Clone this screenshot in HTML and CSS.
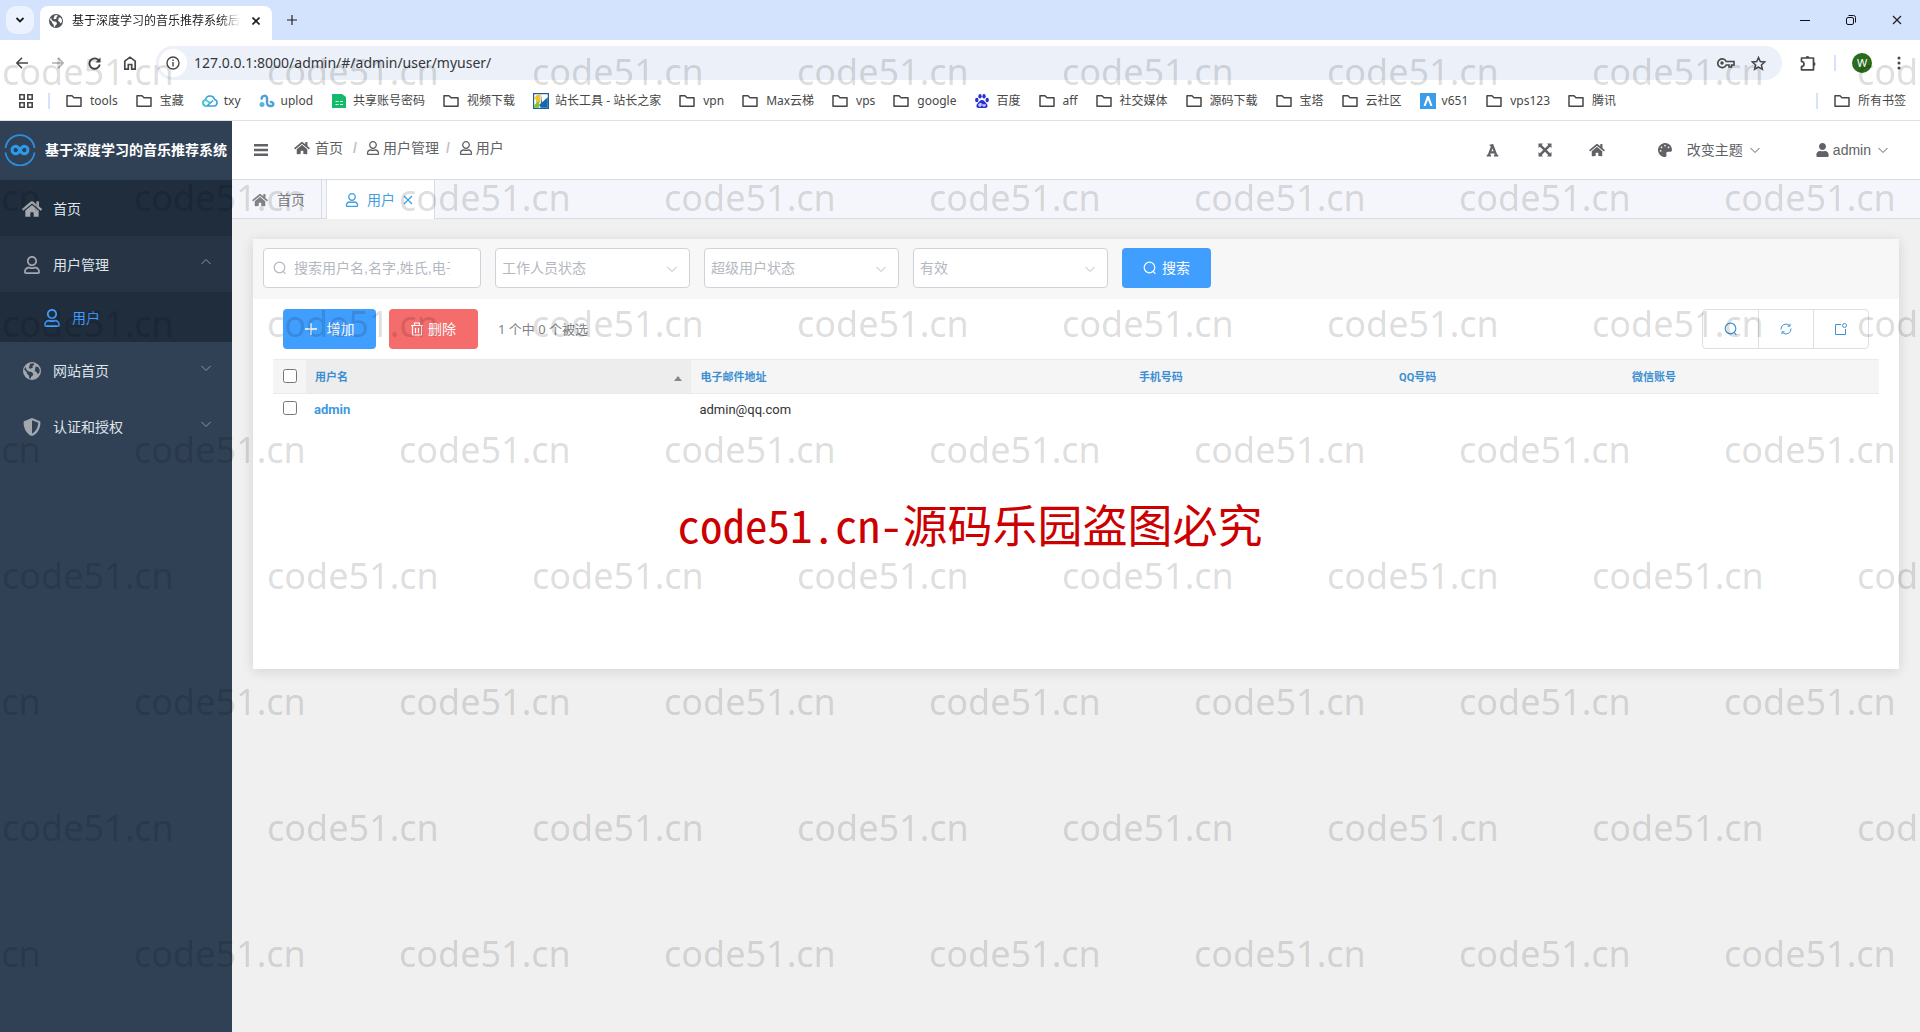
FILE: index.html
```html
<!DOCTYPE html>
<html lang="zh-CN">
<head>
<meta charset="utf-8">
<title>基于深度学习的音乐推荐系统后台</title>
<link rel="stylesheet" href="styles.css">
</head>
<body>
<svg class="sprite" aria-hidden="true">
  <symbol id="home" viewBox="0 0 576 512"><path fill="currentColor" d="M280.37 148.26L96 300.11V464a16 16 0 0 0 16 16l112.06-.29a16 16 0 0 0 15.92-16V368a16 16 0 0 1 16-16h64a16 16 0 0 1 16 16v95.64a16 16 0 0 0 16 16.05L464 480a16 16 0 0 0 16-16V300L295.67 148.26a12.19 12.19 0 0 0-15.3 0zM571.6 251.47L488 182.56V44.05a12 12 0 0 0-12-12h-56a12 12 0 0 0-12 12v72.61L318.47 43a48 48 0 0 0-61 0L4.34 251.47a12 12 0 0 0-1.6 16.9l25.5 31A12 12 0 0 0 45.15 301l235.22-193.74a12.19 12.19 0 0 1 15.3 0L530.9 301a12 12 0 0 0 16.9-1.6l25.5-31a12 12 0 0 0-1.7-16.93z"/></symbol>
  <symbol id="person" viewBox="0 0 448 512"><path fill="currentColor" d="M313.6 304c-28.7 0-42.5 16-89.6 16-47.1 0-60.8-16-89.6-16C60.2 304 0 364.2 0 438.4V464c0 26.5 21.5 48 48 48h352c26.5 0 48-21.5 48-48v-25.6c0-74.2-60.2-134.4-134.4-134.4zM400 464H48v-25.6c0-47.6 38.8-86.4 86.4-86.4 14.6 0 38.3 16 89.6 16 51.7 0 74.9-16 89.6-16 47.6 0 86.4 38.8 86.4 86.4V464zM224 288c79.5 0 144-64.5 144-144S303.5 0 224 0 80 64.5 80 144s64.5 144 144 144zm0-240c52.9 0 96 43.1 96 96s-43.1 96-96 96-96-43.1-96-96 43.1-96 96-96z"/></symbol>
  <symbol id="user" viewBox="0 0 448 512"><path fill="currentColor" d="M224 256c70.7 0 128-57.3 128-128S294.7 0 224 0 96 57.3 96 128s57.3 128 128 128zm89.6 32h-16.7c-22.2 10.2-46.9 16-72.9 16s-50.6-5.8-72.9-16h-16.7C60.2 288 0 348.2 0 422.4V464c0 26.5 21.5 48 48 48h352c26.5 0 48-21.5 48-48v-41.6c0-74.2-60.2-134.4-134.4-134.4z"/></symbol>
  <symbol id="shield" viewBox="0 0 512 512"><path fill="currentColor" d="M466.5 83.7l-192-80a48.15 48.15 0 0 0-36.9 0l-192 80C27.7 91.1 16 108.6 16 128c0 198.5 114.5 335.7 221.5 380.3 11.8 4.9 25.1 4.9 36.9 0C360.1 472.6 496 349.3 496 128c0-19.4-11.7-36.9-29.5-44.3zM256.1 446.3l-.1-381 175.9 73.3c-3.3 151.4-82.1 261.1-175.8 307.7z"/></symbol>
  <symbol id="globe" viewBox="0 0 20 20"><path fill="currentColor" fill-rule="evenodd" d="M10 0a10 10 0 1 0 0 20 10 10 0 0 0 0-20zM3 5.500l1 3.500 2.500 1.500 3 .5 2 2-1 2.500-1.500 1-.5 2-1.500-.5-.5-3-2-2-.5-2-2.500-2.500 0-1zM8 2l3.500-.5 1 1.500-2 1.500.5 1.500-2.500 1.500-2-.5.5-2zM14 5l3 .5 1.500 3 0 3-2 2-1.500-2.500-2-1 .5-2.500z"/></symbol>
  <symbol id="palette" viewBox="0 0 512 512"><path fill="currentColor" d="M204.3 5C104.9 24.4 24.8 104.3 5.200 203.4c-37 187 131.7 326.4 258.8 306.7 41.2-6.4 61.4-54.6 42.5-91.7-23.1-45.4 9.900-98.4 60.9-98.4h79.7c35.8 0 64.8-29.6 64.9-65.3C511.5 97.1 368.1-26.9 204.3 5zM96 320c-17.7 0-32-14.3-32-32s14.3-32 32-32 32 14.3 32 32-14.3 32-32 32zm32-128c-17.7 0-32-14.3-32-32s14.3-32 32-32 32 14.3 32 32-14.3 32-32 32zm128-64c-17.7 0-32-14.3-32-32s14.3-32 32-32 32 14.3 32 32-14.3 32-32 32zm128 64c-17.7 0-32-14.3-32-32s14.3-32 32-32 32 14.3 32 32-14.3 32-32 32z"/></symbol>
  <symbol id="expand" viewBox="0 0 14 14"><path fill="currentColor" d="M.5.5H5L3.700 1.900 7 5.200l3.300-3.300L9 .5h4.500V5l-1.400-1.300L8.800 7l3.300 3.300L13.500 9v4.500H9l1.300-1.400L7 8.800l-3.300 3.300L5 13.500H.5V9l1.400 1.300L5.200 7 1.900 3.700.5 5z"/></symbol>
  <symbol id="letter-a" viewBox="0 0 14 14"><path fill="none" stroke="currentColor" stroke-width="2.400" d="M2.800 12.500 7 1.500l4.200 11M4.200 9h5.600"/><path fill="none" stroke="currentColor" stroke-width="1.800" d="M.8 12.600h4.600M8.600 12.600h4.600M4 1.500h3.500"/></symbol>
  <symbol id="bars" viewBox="0 0 14 14"><path fill="currentColor" d="M0 1h14v2.400H0zM0 5.800h14v2.400H0zM0 10.600h14V13H0z"/></symbol>
  <symbol id="down" viewBox="0 0 10 10"><path fill="none" stroke="currentColor" d="M.5 3 5 7.500 9.500 3"/></symbol>
  <symbol id="up" viewBox="0 0 10 10"><path fill="none" stroke="currentColor" d="M.5 7 5 2.500 9.500 7"/></symbol>
  <symbol id="search" viewBox="0 0 14 14"><path fill="none" stroke="currentColor" stroke-width="1.200" d="M6.500 1.200a5.300 5.300 0 1 0 0 10.600 5.300 5.300 0 0 0 0-10.600zM10.200 10.400l2.200 2.400"/></symbol>
  <symbol id="cross" viewBox="0 0 10 10"><path fill="none" stroke="currentColor" stroke-width="1.200" d="M1 1l8 8M9 1 1 9"/></symbol>
  <symbol id="plus" viewBox="0 0 12 12"><path fill="none" stroke="currentColor" stroke-width="1.400" d="M6 0v12M0 6h12"/></symbol>
  <symbol id="folder" viewBox="0 0 16 16"><path fill="none" stroke="#474747" stroke-width="1.500" stroke-linejoin="round" d="M1 2.800h5l2 2h7v8.400H1z"/></symbol>
</svg>

<header class="chrome">
  <div class="tabbar">
    <button class="tab-search" aria-label="搜索标签页"><svg width="10" height="10" viewBox="0 0 10 10"><path fill="none" stroke="#1f1f1f" stroke-width="1.800" d="M1.500 3 5 6.500 8.500 3"/></svg></button>
    <div class="browser-tab">
      <svg width="14" height="14" class="tab-globe"><use href="#globe"/></svg>
      <span class="tab-title">基于深度学习的音乐推荐系统后台</span>
      <button class="bare" aria-label="关闭"><svg width="8" height="8" viewBox="0 0 8 8"><path stroke="#1f1f1f" stroke-width="1.600" d="M.5.5l7 7M7.500.5l-7 7"/></svg></button>
    </div>
    <button class="bare new-tab" aria-label="新标签页"><svg width="10" height="10"><use href="#plus"/></svg></button>
    <div class="window-buttons">
      <button class="bare" aria-label="最小化"><svg width="10" height="10" viewBox="0 0 10 10"><path stroke="#111" d="M0 5.500h10"/></svg></button>
      <button class="bare" aria-label="还原"><svg width="10" height="10" viewBox="0 0 10 10"><g fill="none" stroke="#111"><rect x=".5" y="2.500" width="7" height="7" rx="1.500"/><path d="M2.500.5H7.500a2 2 0 0 1 2 2V7.500"/></g></svg></button>
      <button class="bare" aria-label="关闭窗口"><svg width="10" height="10"><use href="#cross"/></svg></button>
    </div>
  </div>
  <div class="toolbar">
    <button class="bare tool" aria-label="后退"><svg width="12" height="12" viewBox="0 0 12 12"><path fill="none" stroke="#474747" stroke-width="1.600" d="M12 6H1M6 .8.900 6 6 11.200"/></svg></button>
    <button class="bare tool" aria-label="前进"><svg width="12" height="12" viewBox="0 0 12 12"><path fill="none" stroke="#b0b0b0" stroke-width="1.600" d="M0 6h11M6 .8 11.100 6 6 11.200"/></svg></button>
    <button class="bare tool" aria-label="刷新"><svg width="13" height="13" viewBox="0 0 13 13"><path fill="none" stroke="#474747" stroke-width="1.900" d="M11.800 7.500A5.200 5.200 0 1 1 10.500 3"/><path fill="#474747" d="M12.500.5v5H7.500z"/></svg></button>
    <button class="bare tool" aria-label="主页"><svg width="14" height="14" viewBox="0 0 14 14"><path fill="none" stroke="#474747" stroke-width="1.700" d="M1.800 13.100V5.200L7 1.200l5.200 4v7.900H8.700V8.500H5.300v4.600z"/></svg></button>
    <div class="address">
      <button class="bare site-info" aria-label="网站信息"><svg width="14" height="14" viewBox="0 0 14 14"><circle cx="7" cy="7" r="6" fill="none" stroke="#474747" stroke-width="1.400"/><path stroke="#474747" stroke-width="1.400" d="M7 6v4.500M7 3.500V5"/></svg></button>
      <input class="url" aria-label="地址" value="127.0.0.1:8000/admin/#/admin/user/myuser/">
      <button class="bare pill-btn" aria-label="密码"><svg width="18" height="12" viewBox="0 0 18 12"><path fill="none" stroke="#474747" stroke-width="1.600" d="M9.200 4.500A4.400 4.400 0 1 0 9.200 8H12v2h2.500V8H17V4.500z"/><circle cx="5" cy="6" r="1.700" fill="#474747"/></svg></button>
      <button class="bare pill-btn" aria-label="收藏"><svg width="15" height="15" viewBox="0 0 15 15"><path fill="none" stroke="#474747" stroke-width="1.500" d="M7.500 1.500l1.800 4.100 4.400.4-3.300 2.900 1 4.400-3.900-2.300-3.900 2.300 1-4.400L1.300 6l4.400-.4z"/></svg></button>
    </div>
    <button class="bare extension" aria-label="扩展程序"><svg width="17" height="17" viewBox="0 0 17 17"><path fill="none" stroke="#474747" stroke-width="1.700" stroke-linejoin="round" d="M1.500 3h12v11.800h-12V11.500a2.500 2.500 0 0 0 0-5z"/><path fill="#474747" d="M5.500 3a2 2 0 0 1 4 0zM13.500 7a2 2 0 0 1 0 4z"/></svg></button>
    <span class="rule"></span>
    <button class="avatar" aria-label="个人资料">W</button>
    <button class="bare menu-dots" aria-label="菜单"><svg width="4" height="14" viewBox="0 0 4 14"><g fill="#474747"><circle cx="2" cy="2" r="1.500"/><circle cx="2" cy="7" r="1.500"/><circle cx="2" cy="12" r="1.500"/></g></svg></button>
  </div>
  <nav class="bookmarks">
    <button class="bare" aria-label="应用"><svg width="14" height="14" viewBox="0 0 14 14"><path fill="none" stroke="#474747" stroke-width="1.600" d="M.8.800h4.400v4.400H.8zM8.800.800h4.400v4.400H8.800zM.8 8.800h4.400v4.400H.8zM8.800 8.800h4.400v4.400H8.800z"/></svg></button>
    <span class="rule"></span>
    <a href="#"><svg class="ic"><use href="#folder"/></svg>tools</a>
    <a href="#"><svg class="ic"><use href="#folder"/></svg>宝藏</a>
    <a href="#" class="fav"><svg class="ic" viewBox="0 0 16 16"><path fill="none" stroke="#3a9fe0" stroke-width="1.600" d="M4 13a3.200 3.200 0 0 1-.5-6.300 4.600 4.600 0 0 1 9-.2A3.300 3.300 0 0 1 12 13H5l6-5.500"/><path fill="none" stroke="#3fd0c0" stroke-width="1.600" d="M4 13a3.200 3.200 0 0 1-.5-6.300L8 10"/></svg>txy</a>
    <a href="#" class="fav"><svg class="ic" viewBox="0 0 16 16"><path fill="none" stroke="#4d9fd6" stroke-width="2.400" d="M3 6.500a2.600 2.600 0 1 1 5-2v5.500a3 3 0 0 0 3 3h1.500a2 2 0 1 0-1.500-3.500"/><circle cx="3" cy="11.500" r="2.500" fill="#58b4e4"/></svg>uplod</a>
    <a href="#" class="fav"><svg class="ic" viewBox="0 0 16 16"><path fill="#15b96b" d="M1 1h10l4 3v11H1z"/><path stroke="#d6ffe9" d="M4.500 8.500h3M9 8.500h3M4.500 11.500h3M9 11.500h3"/></svg>共享账号密码</a>
    <a href="#"><svg class="ic"><use href="#folder"/></svg>视频下载</a>
    <a href="#" class="fav"><svg class="ic" viewBox="0 0 16 16"><path fill="#fff" stroke="#1c5f9e" stroke-width="1.200" d="M.6.600h14.800v14.800H.6z"/><path fill="#f1c232" d="M1.200 6.500C2 3 4 1.200 7.500 1.200V9l-4.500 5.500V6z"/><path fill="#1769ae" d="M9 1.200v8l5.800-5v10.600H8L6 12l2-2z"/><path fill="#7cc242" d="M1.200 12 6 8v6.800H1.200z"/></svg>站长工具 - 站长之家</a>
    <a href="#"><svg class="ic"><use href="#folder"/></svg>vpn</a>
    <a href="#"><svg class="ic"><use href="#folder"/></svg>Max云梯</a>
    <a href="#"><svg class="ic"><use href="#folder"/></svg>vps</a>
    <a href="#"><svg class="ic"><use href="#folder"/></svg>google</a>
    <a href="#" class="fav"><svg class="ic" viewBox="0 0 16 16"><g fill="#2a32d2"><ellipse cx="2.800" cy="7" rx="1.700" ry="2.200"/><ellipse cx="6" cy="3.300" rx="1.700" ry="2.200"/><ellipse cx="10" cy="3.300" rx="1.700" ry="2.200"/><ellipse cx="13.200" cy="7" rx="1.700" ry="2.200"/><path d="M8 7c2 0 3 2 4.500 3.500s1.500 4.500-1 4.500h-7c-2.500 0-2.500-3-1-4.500S6 7 8 7z"/></g><path fill="none" stroke="#fff" d="M7 10v3H5v-2h2M9 11v2h2v-2"/></svg>百度</a>
    <a href="#"><svg class="ic"><use href="#folder"/></svg>aff</a>
    <a href="#"><svg class="ic"><use href="#folder"/></svg>社交媒体</a>
    <a href="#"><svg class="ic"><use href="#folder"/></svg>源码下载</a>
    <a href="#"><svg class="ic"><use href="#folder"/></svg>宝塔</a>
    <a href="#"><svg class="ic"><use href="#folder"/></svg>云社区</a>
    <a href="#" class="fav"><svg class="ic" viewBox="0 0 16 16"><path fill="#3b9cea" d="M0 0h16v16H0z"/><path fill="#fff" d="M7 3h2l3.500 10h-2L8 7l-2.500 6h-2z"/></svg>v651</a>
    <a href="#"><svg class="ic"><use href="#folder"/></svg>vps123</a>
    <a href="#"><svg class="ic"><use href="#folder"/></svg>腾讯</a>
    <span class="rule last"></span>
    <a href="#"><svg class="ic"><use href="#folder"/></svg>所有书签</a>
  </nav>
</header>

<div class="app">
  <aside class="sidebar">
    <div class="brand">
      <svg width="32" height="32" viewBox="0 0 32 32"><g fill="none" stroke="#2c8fe0"><path stroke-width="1.800" d="M1.500 14A14.600 14.600 0 0 1 30.500 14M30.500 18.500A14.600 14.600 0 0 1 1.500 18.500"/><path stroke="#2a9cf0" stroke-width="3" d="M16 16c-1.500-2.800-2.800-3.800-4.200-3.800a3.800 3.800 0 0 0 0 7.600c1.400 0 2.700-1 4.200-3.800s2.800-3.800 4.200-3.800a3.800 3.800 0 0 1 0 7.600c-1.400 0-2.700-1-4.200-3.800z"/></g></svg>
      <strong>基于深度学习的音乐推荐系统</strong>
    </div>
    <nav>
      <a class="item home" href="#"><svg width="20" height="18"><use href="#home"/></svg><span>首页</span></a>
      <a class="item open" href="#"><svg width="20" height="18"><use href="#person"/></svg><span>用户管理</span><svg class="arrow" width="10" height="10"><use href="#up"/></svg></a>
      <a class="item sub" href="#"><svg width="20" height="18"><use href="#person"/></svg><span>用户</span></a>
      <a class="item" href="#"><svg width="20" height="18"><use href="#globe"/></svg><span>网站首页</span><svg class="arrow" width="10" height="10"><use href="#down"/></svg></a>
      <a class="item" href="#"><svg width="20" height="18"><use href="#shield"/></svg><span>认证和授权</span><svg class="arrow" width="10" height="10"><use href="#down"/></svg></a>
    </nav>
  </aside>

  <div class="page">
    <div class="topbar">
      <button class="bare collapse" aria-label="折叠菜单"><svg width="14" height="14"><use href="#bars"/></svg></button>
      <nav class="crumbs">
        <a href="#" class="first"><svg width="16" height="14"><use href="#home"/></svg>首页</a><i>/</i>
        <a href="#"><svg width="14" height="14"><use href="#person"/></svg>用户管理</a><i>/</i>
        <a href="#"><svg width="14" height="14"><use href="#person"/></svg>用户</a>
      </nav>
      <div class="actions">
        <button class="bare act" aria-label="字体"><svg width="13" height="13"><use href="#letter-a"/></svg></button>
        <button class="bare act" aria-label="全屏"><svg width="14" height="14"><use href="#expand"/></svg></button>
        <button class="bare act" aria-label="主页"><svg width="16" height="14"><use href="#home"/></svg></button>
        <button class="bare theme"><svg width="14" height="14"><use href="#palette"/></svg><span>改变主题</span><svg width="10" height="10"><use href="#down"/></svg></button>
        <button class="bare account"><svg width="13" height="14"><use href="#user"/></svg><span>admin</span><svg width="10" height="10"><use href="#down"/></svg></button>
      </div>
    </div>
    <div class="tabs">
      <a class="tab" href="#"><svg width="16" height="14"><use href="#home"/></svg>首页</a>
      <a class="tab active" href="#"><svg width="14" height="14"><use href="#person"/></svg>用户<svg class="x" width="10" height="10"><use href="#cross"/></svg></a>
    </div>
    <main class="card">
      <form class="filters">
        <label class="field search"><svg width="14" height="14"><use href="#search"/></svg><input type="text" aria-label="搜索" placeholder="搜索用户名,名字,姓氏,电子邮件地址"></label>
        <label class="field"><select aria-label="工作人员状态"><option>工作人员状态</option></select><svg width="10" height="10"><use href="#down"/></svg></label>
        <label class="field"><select aria-label="超级用户状态"><option>超级用户状态</option></select><svg width="10" height="10"><use href="#down"/></svg></label>
        <label class="field"><select aria-label="有效"><option>有效</option></select><svg width="10" height="10"><use href="#down"/></svg></label>
        <button type="button" class="btn blue"><svg width="14" height="14"><use href="#search"/></svg>搜索</button>
      </form>
      <div class="commands">
        <button class="btn blue add"><svg width="12" height="12"><use href="#plus"/></svg>增加</button>
        <button class="btn red"><svg width="12" height="14" viewBox="0 0 12 14"><path fill="none" stroke="#fff" stroke-width="1.200" d="M0 3.500h12M3.500 3V1h5v2M1.500 4v9h9V4M4.500 6v5M7.500 6v5"/></svg>删除</button>
        <span class="count">1 个中 0 个被选</span>
        <div class="group">
          <button aria-label="搜索"><svg width="14" height="14"><use href="#search"/></svg></button>
          <button aria-label="刷新"><svg width="12" height="12" viewBox="0 0 12 12"><path fill="none" stroke="currentColor" d="M1 6.500A5 5 0 0 1 9.500 2.500M11 5.500A5 5 0 0 1 2.500 9.500M7.500 3.200h2.500V.8M4.500 8.800H2v2.400"/></svg></button>
          <button aria-label="导出"><svg width="12" height="12" viewBox="0 0 12 12"><path fill="none" stroke="currentColor" d="M6 1.500H.500v10h10V6"/><circle cx="9.500" cy="2.500" r="2" fill="none" stroke="currentColor"/></svg></button>
        </div>
      </div>
      <table>
        <colgroup><col class="c-check"><col class="c-name"><col class="c-mail"><col class="c-phone"><col class="c-qq"><col class="c-wx"></colgroup>
        <thead><tr><th><input type="checkbox" aria-label="全选"></th><th class="sorted"><a href="#">用户名</a><svg width="8" height="5" viewBox="0 0 8 5"><path fill="#888" d="M0 5 4 0l4 5z"/></svg></th><th><a href="#">电子邮件地址</a></th><th><a href="#">手机号码</a></th><th><a href="#">QQ号码</a></th><th><a href="#">微信账号</a></th></tr></thead>
        <tbody><tr><td><input type="checkbox" aria-label="选择 admin"></td><td><a href="#" class="user">admin</a></td><td>admin@qq.com</td><td></td><td></td><td></td></tr></tbody>
      </table>
    </main>
  </div>
</div>

<div class="watermark" aria-hidden="true">
  <div><span>code51.cn</span><span>code51.cn</span><span>code51.cn</span><span>code51.cn</span><span>code51.cn</span><span>code51.cn</span><span>code51.cn</span><span>code51.cn</span></div>
  <div><span>code51.cn</span><span>code51.cn</span><span>code51.cn</span><span>code51.cn</span><span>code51.cn</span><span>code51.cn</span><span>code51.cn</span><span>code51.cn</span></div>
  <div><span>code51.cn</span><span>code51.cn</span><span>code51.cn</span><span>code51.cn</span><span>code51.cn</span><span>code51.cn</span><span>code51.cn</span><span>code51.cn</span></div>
  <div><span>code51.cn</span><span>code51.cn</span><span>code51.cn</span><span>code51.cn</span><span>code51.cn</span><span>code51.cn</span><span>code51.cn</span><span>code51.cn</span></div>
  <div><span>code51.cn</span><span>code51.cn</span><span>code51.cn</span><span>code51.cn</span><span>code51.cn</span><span>code51.cn</span><span>code51.cn</span><span>code51.cn</span></div>
  <div><span>code51.cn</span><span>code51.cn</span><span>code51.cn</span><span>code51.cn</span><span>code51.cn</span><span>code51.cn</span><span>code51.cn</span><span>code51.cn</span></div>
  <div><span>code51.cn</span><span>code51.cn</span><span>code51.cn</span><span>code51.cn</span><span>code51.cn</span><span>code51.cn</span><span>code51.cn</span><span>code51.cn</span></div>
  <div><span>code51.cn</span><span>code51.cn</span><span>code51.cn</span><span>code51.cn</span><span>code51.cn</span><span>code51.cn</span><span>code51.cn</span><span>code51.cn</span></div>
</div>
<p class="notice">code51.cn-源码乐园盗图必究</p>
</body>
</html>
```
FILE: styles.css
```css
* { box-sizing: border-box; }
body {
  margin: 0;
  min-height: 100vh;
  position: relative;
  display: flex;
  flex-direction: column;
  overflow: hidden;
  background: #f0f0f0;
  color: #606266;
  font: 14px/20px "Liberation Sans", "Noto Sans CJK SC", sans-serif;
}
a { color: inherit; text-decoration: none; }
svg { display: block; flex: none; }
.sprite { position: absolute; width: 0; height: 0; }
button, input, select { font: inherit; color: inherit; }
.bare {
  display: flex;
  align-items: center;
  justify-content: center;
  padding: 0;
  border: 0;
  background: none;
}

/* browser frame */
.chrome {
  background: #fff;
  border-bottom: 1px solid #dfe1e5;
  color: #474747;
  font: 12px/18px "Noto Sans", "Noto Sans CJK SC", sans-serif;
}
.tabbar {
  display: flex;
  height: 40px;
  padding: 6px 0 0 6px;
  background: #d3e3fd;
  color: #1f1f1f;
}
.tab-search {
  display: flex;
  align-items: center;
  justify-content: center;
  width: 28px;
  height: 28px;
  padding: 0;
  border: 0;
  border-radius: 10px;
  background: #edf3fe;
}
.browser-tab {
  display: flex;
  align-items: center;
  width: 232px;
  margin-left: 6px;
  padding: 0 12px 4px 9px;
  border-radius: 8px 8px 0 0;
  background: #fff;
}
.tab-globe { color: #505357; }
.tab-title {
  flex: 1;
  margin: 0 12px 0 9px;
  overflow: hidden;
  white-space: nowrap;
  mask-image: linear-gradient(to right, #000 88%, transparent);
}
.new-tab { width: 40px; height: 28px; }
.window-buttons { display: flex; margin-left: auto; }
.window-buttons .bare { width: 46px; height: 28px; }
.toolbar {
  display: flex;
  align-items: center;
  height: 40px;
  padding: 6px 6px 0 4px;
}
.tool { width: 36px; height: 34px; }
.address {
  display: flex;
  flex: 1;
  align-items: center;
  height: 34px;
  margin-left: 8px;
  padding: 0 8px 0 3px;
  border-radius: 17px;
  background: #ebf0f9;
}
.site-info { width: 28px; height: 28px; border-radius: 14px; background: #fff; }
.url {
  flex: 1;
  padding: 0 0 0 7px;
  border: 0;
  background: none;
  font-size: 14px;
  color: #35373a;
}
.pill-btn { width: 32px; height: 28px; }
.extension { width: 52px; }
.rule { flex: none; width: 2px; height: 16px; background: #d3e3fd; }
.avatar {
  width: 20px;
  height: 20px;
  margin: 0 12px 0 16px;
  padding: 0;
  border: 0;
  border-radius: 50%;
  background: #2a6b1e;
  color: #fff;
  font-size: 11px;
  line-height: 20px;
}
.menu-dots { width: 30px; }
.bookmarks {
  display: flex;
  align-items: center;
  height: 40px;
  padding: 2px 14px 0 19px;
  white-space: nowrap;
}
.bookmarks .rule { margin: 0 16px 0 15px; }
.bookmarks .rule.last { margin-left: auto; }
.bookmarks a { display: flex; align-items: center; gap: 8px; margin-right: 18px; }
.bookmarks a:last-child { margin-right: 0; }
.bookmarks .fav { gap: 6px; }
.ic { width: 16px; height: 16px; }

/* admin shell */
.app { display: flex; flex: 1; }
.sidebar { flex: none; width: 232px; background: #304156; color: #dfe4ea; }
.brand {
  display: flex;
  align-items: center;
  gap: 9px;
  height: 59px;
  padding: 0 0 2px 4px;
  color: #fff;
  white-space: nowrap;
}
.item {
  display: flex;
  align-items: center;
  gap: 11px;
  height: 56px;
  padding: 1px 21px 0 22px;
}
.item svg { color: #a3a8ae; }
.item .arrow { margin: -6px 0 0 auto; color: #8b96a5; }
.home { background: #1f2d3d; }
.open { background: #263445; }
.sub { height: 50px; padding-left: 42px; gap: 10px; background: #1f2d3d; color: #409eff; }
.sub svg { color: #409eff; }
.page { flex: 1; min-width: 0; }
.topbar {
  display: flex;
  align-items: center;
  height: 59px;
  padding: 0 32px 0 22px;
  border-bottom: 1px solid #d8dce5;
  background: #fff;
}
.crumbs { display: flex; margin: 0 0 4px 26px; }
.crumbs a { display: flex; align-items: center; gap: 3px; }
.crumbs .first { gap: 5px; margin-right: 3px; }
.crumbs i { margin: 0 9px 0 7px; color: #c0c4cc; font-style: normal; font-weight: bold; }
.actions { display: flex; align-items: center; margin-left: auto; }
.act { width: 52px; height: 40px; }
.theme { margin-left: 35px; height: 40px; }
.theme span { margin: 0 7px 0 15px; }
.account { margin-left: 56px; height: 40px; }
.account span { margin: 0 7px 0 4px; }
.tabs {
  display: flex;
  gap: 4px;
  height: 39px;
  border-bottom: 1px solid #d8dce5;
  background: #f5f6fb;
}
.tab {
  display: flex;
  align-items: center;
  gap: 9px;
  height: 39px;
  padding: 0 16px 0 20px;
  border-right: 1px solid #d8dce5;
  color: #808286;
}
.tab.active {
  padding: 0 21px 0 18px;
  gap: 8px;
  border-left: 1px solid #d8dce5;
  background: #fff;
  color: #409eda;
}
.card {
  min-height: 430px;
  margin: 20px 21px 0;
  background: #fff;
  box-shadow: 0 2px 12px rgba(0, 0, 0, .12);
}
.filters {
  display: flex;
  gap: 14px;
  height: 60px;
  padding: 9px 10px 0;
  background: #f7f7f7;
}
.field { position: relative; width: 195px; height: 40px; }
.field.search { width: 218px; }
.field input, .field select {
  width: 100%;
  height: 40px;
  padding: 0 30px 0 6px;
  border: 1px solid #cfd2d8;
  border-radius: 4px;
  background: #fff;
  color: #b4b8c0;
  appearance: none;
}
.field.search input { padding-left: 30px; }
.field input::placeholder { color: #b4b8c0; }
.field svg { position: absolute; top: 16px; right: 13px; color: #b4b8c0; }
.field.search svg { top: 13px; left: 10px; }
.btn {
  display: flex;
  align-items: center;
  justify-content: center;
  gap: 5px;
  width: 89px;
  height: 40px;
  padding: 0;
  border: 0;
  border-radius: 4px;
  color: #fff;
}
.blue { background: #409eff; }
.red { background: #f56c6c; }
.add { width: 93px; gap: 10px; }
.commands {
  display: flex;
  align-items: center;
  gap: 13px;
  padding: 10px 30px;
}
.count { margin-left: 7px; color: #808286; font: 13px/20px "Noto Sans", "Noto Sans CJK SC", sans-serif; }
.group {
  display: flex;
  margin-left: auto;
  border: 1px solid #dcdfe6;
  border-radius: 4px;
}
.group button {
  display: flex;
  align-items: center;
  justify-content: center;
  width: 55px;
  height: 38px;
  padding: 0;
  border: 0;
  background: none;
  color: #3d93d6;
}
.group button + button { border-left: 1px solid #dcdfe6; }
table {
  width: calc(100% - 40px);
  margin-left: 20px;
  border-collapse: collapse;
  table-layout: fixed;
  font: 13px/16px Roboto, "Noto Sans CJK SC", sans-serif;
  color: #333;
}
.c-check { width: 33px; }
.c-name { width: 24%; }
.c-mail { width: 27.3%; }
.c-phone { width: 16.2%; }
.c-qq { width: 14.5%; }
th, td { height: 32px; padding: 0 8px; text-align: left; }
th {
  height: 34px;
  padding: 2px 9px 0;
  border-top: 1px solid #eaeaea;
  border-bottom: 1px solid #eaeaea;
  background: #f5f5f5;
  color: #3d8fd1;
  font-size: 11px;
}
th.sorted { background: #ededed; }
.sorted svg { float: right; margin-top: 6px; }
table input { display: block; width: 14px; height: 14px; margin: -4px 0 0 2px; }
th input { margin-left: 1px; }
.user { color: #409ade; font-weight: bold; }

/* overlay marks */
.watermark {
  position: absolute;
  inset: 0;
  overflow: hidden;
  padding: 48px 0 0 2px;
  color: rgba(0, 0, 0, .15);
  font: 36px/48px "Noto Sans", sans-serif;
  pointer-events: none;
}
.watermark div { display: flex; height: 126px; }
.watermark div:nth-child(even) { margin-left: -133px; }
.watermark span { flex: none; width: 265px; }
.notice {
  position: absolute;
  top: 494px;
  left: 0;
  width: 100%;
  margin: 0;
  padding-left: 20px;
  color: #c00;
  font: 45px/60px "Noto Sans Mono CJK SC", "Liberation Mono", "Noto Sans CJK SC", monospace;
  text-align: center;
  pointer-events: none;
}
```
